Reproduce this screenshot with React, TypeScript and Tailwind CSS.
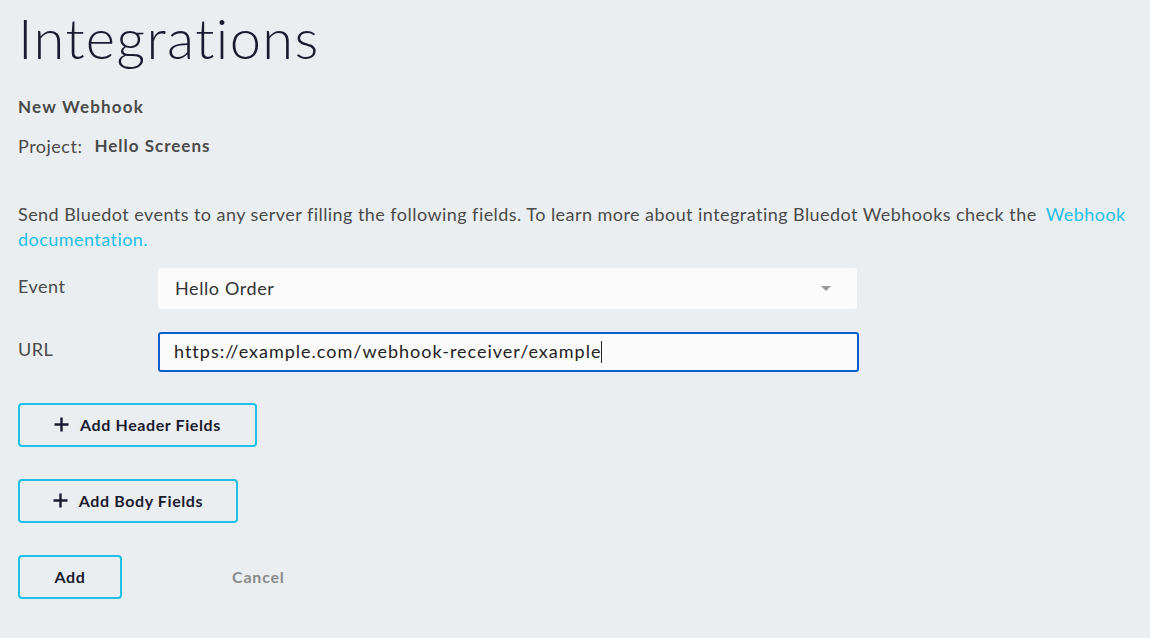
const FieldRow = ({ label, children }: { label: string; children: React.ReactNode }) => (
  <div className="flex items-center">
    <div className="w-[140px] pb-[4px] text-[18px] tracking-[0.5px] text-[#4a4a4a]">{label}</div>
    {children}
  </div>
);

const PlusIcon = () => (
  <svg width="15" height="15" viewBox="0 0 15 15" fill="none" stroke="currentColor" strokeWidth="2.4">
    <path d="M7.5 0.5v14M0.5 7.5h14" />
  </svg>
);

const OutlineButton = ({ children, className }: { children: React.ReactNode; className?: string }) => (
  <button
    className={
      "flex items-center justify-center gap-[11px] h-[44px] rounded-[4px] border-2 border-[#1ec0e6] text-[16px] tracking-[0.6px] font-bold text-[#1b1b2f] " +
      (className ?? "")
    }
  >
    {children}
  </button>
);

export default function App() {
  return (
    <div className="min-h-[638px] w-full bg-[#ebeef1] pl-[18px] pr-[4px] pt-[5px] font-['Lato',sans-serif]">
      <h1 className="text-[56px] leading-[66px] font-light text-[#1b1b2f] tracking-[1.4px]">Integrations</h1>

      <div className="mt-[23px] text-[17px] font-bold tracking-[1.2px] text-[#4a4a4a]">New Webhook</div>
      <div className="mt-[13px] flex items-center text-[#4a4a4a]">
        <span className="text-[18px] tracking-[0.5px]">Project:</span>
        <span className="ml-[12px] text-[17px] font-bold tracking-[1px]">Hello Screens</span>
      </div>

      <p className="mt-[42px] text-[18px] leading-[25px] tracking-[0.45px] text-[#4a4a4a]">
        Send Bluedot events to any server filling the following fields. To learn more about integrating Bluedot Webhooks check the{" "}
        <a className="pl-[4px] text-[#1ec0e6]">Webhook documentation.</a>
      </p>

      <div className="mt-[16px] flex flex-col gap-[23px]">
        <FieldRow label="Event">
          <div className="flex h-[41px] w-[699px] items-center justify-between rounded-[3px] bg-[#fbfbfb] pl-[17px] pr-[26px] text-[18px] tracking-[0.6px] text-[#333]">
            <span>Hello Order</span>
            <span className="h-0 w-0 border-x-[5px] border-t-[5px] border-x-transparent border-t-[#999]" />
          </div>
        </FieldRow>
        <FieldRow label="URL">
          <div className="flex h-[40px] w-[701px] items-center rounded-[3px] border-2 border-[#0a5fc8] bg-[#fbfbfb] pl-[14px] text-[18px] tracking-[1px] text-[#222]">
            <span>https://example.com/webhook-receiver/example</span>
            <span className="h-[22px] w-px bg-[#222]" />
          </div>
        </FieldRow>
      </div>

      <OutlineButton className="mt-[31px] w-[239px]">
        <PlusIcon />
        Add Header Fields
      </OutlineButton>

      <OutlineButton className="mt-[32px] w-[220px]">
        <PlusIcon />
        Add Body Fields
      </OutlineButton>

      <div className="mt-[32px] flex items-center pb-[38px]">
        <OutlineButton className="w-[104px]">Add</OutlineButton>
        <button className="ml-[110px] text-[16px] font-bold tracking-[0.8px] text-[#8a8a8a]">Cancel</button>
      </div>
    </div>
  );
}
